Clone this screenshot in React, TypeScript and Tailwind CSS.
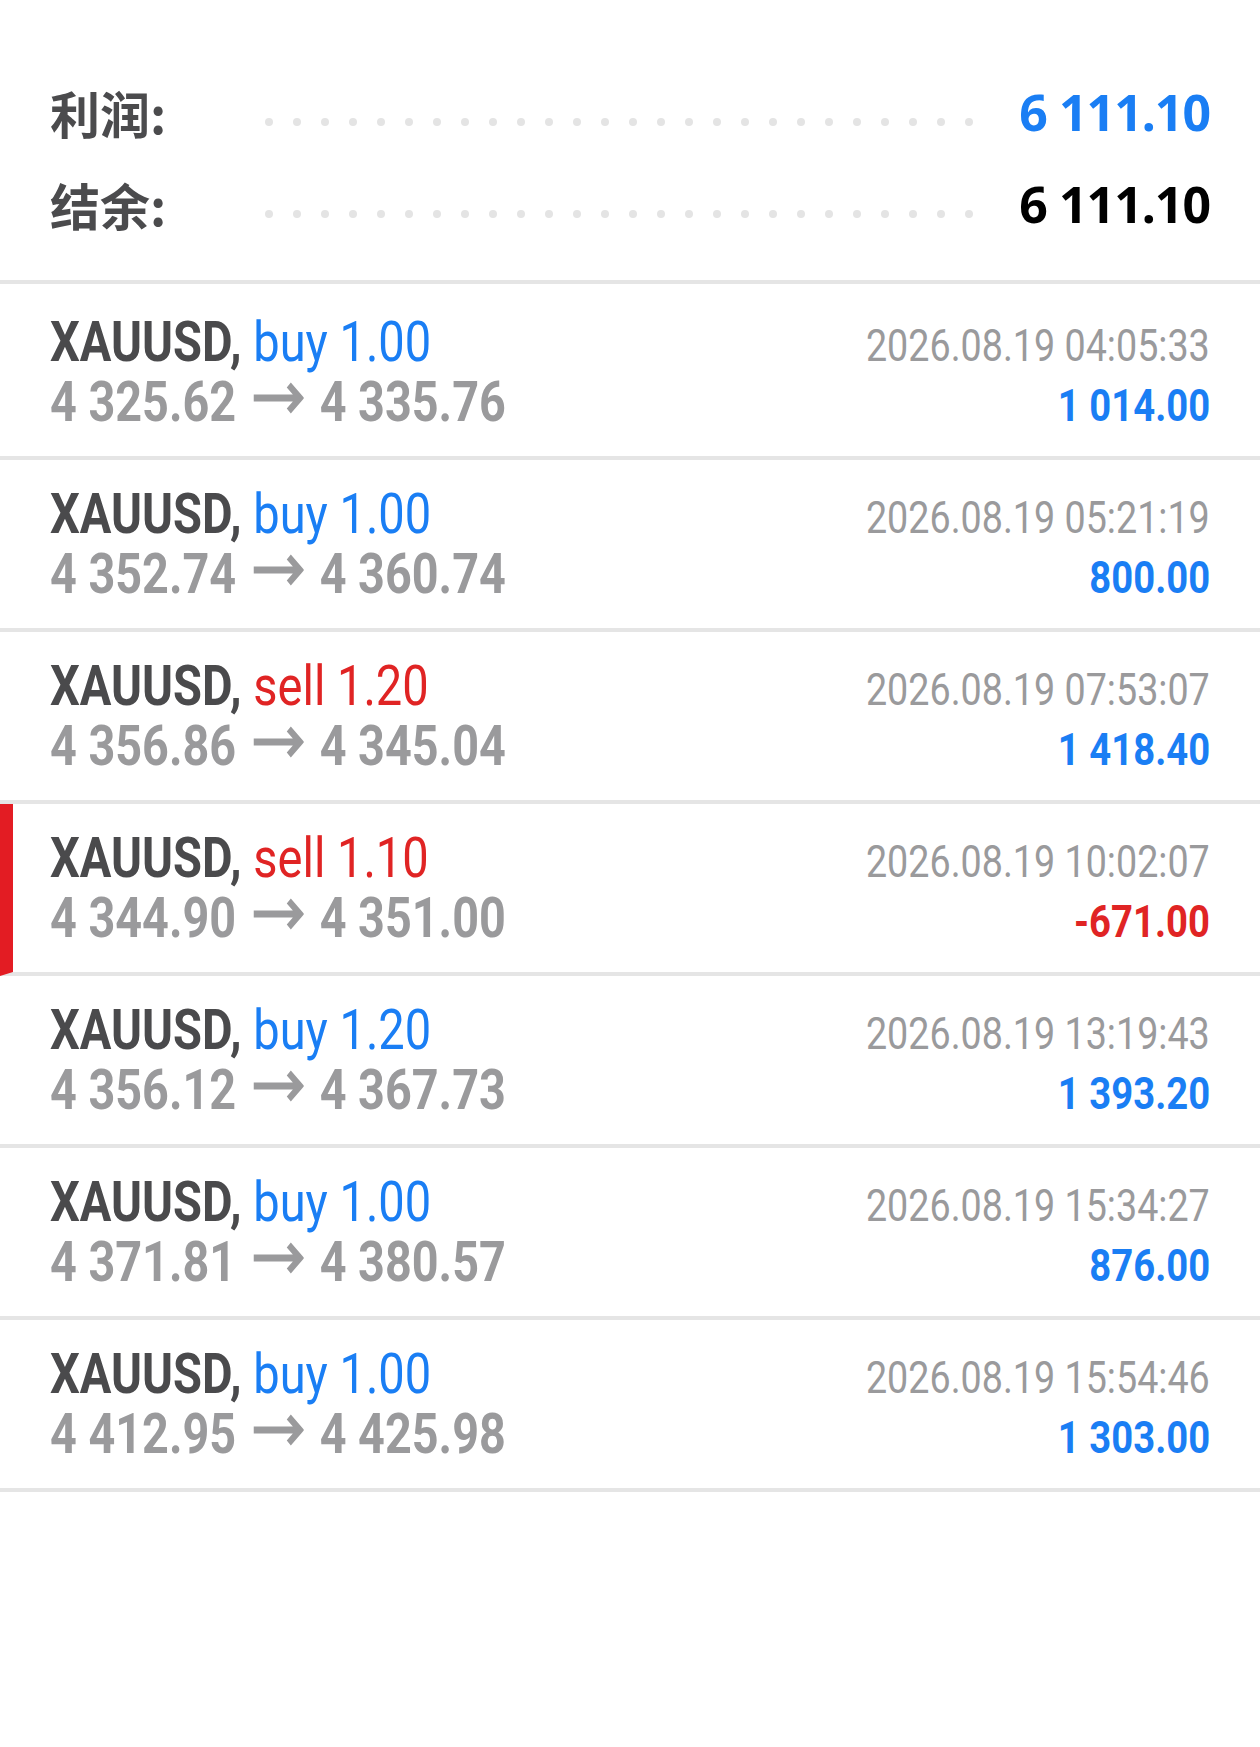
import React from "react";

type Trade = {
  side: "buy" | "sell";
  vol: string;
  open: string;
  close: string;
  time: string;
  profit: string;
  loss?: boolean;
  marked?: boolean;
};

const trades: Trade[] = [
  { side: "buy", vol: "1.00", open: "4 325.62", close: "4 335.76", time: "2026.08.19 04:05:33", profit: "1 014.00" },
  { side: "buy", vol: "1.00", open: "4 352.74", close: "4 360.74", time: "2026.08.19 05:21:19", profit: "800.00" },
  { side: "sell", vol: "1.20", open: "4 356.86", close: "4 345.04", time: "2026.08.19 07:53:07", profit: "1 418.40" },
  { side: "sell", vol: "1.10", open: "4 344.90", close: "4 351.00", time: "2026.08.19 10:02:07", profit: "-671.00", loss: true, marked: true },
  { side: "buy", vol: "1.20", open: "4 356.12", close: "4 367.73", time: "2026.08.19 13:19:43", profit: "1 393.20" },
  { side: "buy", vol: "1.00", open: "4 371.81", close: "4 380.57", time: "2026.08.19 15:34:27", profit: "876.00" },
  { side: "buy", vol: "1.00", open: "4 412.95", close: "4 425.98", time: "2026.08.19 15:54:46", profit: "1 303.00" },
];

function SummaryRow({ label, value, blue }: { label: string; value: string; blue?: boolean }) {
  return (
    <div className="flex items-center h-[92px]">
      <div className="w-[215px] font-['Noto_Sans_CJK_SC',sans-serif] font-bold text-[50px] leading-[60px] text-[#4b4b4d] whitespace-nowrap">
        {label}
      </div>
      <div className="flex items-center h-[60px]">
        <div className="flex gap-[20px] w-[708px] pt-[20px]">
          {Array.from({ length: 26 }).map((_, i) => (
            <span key={i} className="block w-[8px] h-[8px] rounded-full bg-[#e4e4e4]" />
          ))}
        </div>
      </div>
      <div
        className={
          "ml-auto font-['Noto_Sans',sans-serif] font-bold text-[50px] leading-[60px] tracking-[-1px] whitespace-nowrap " +
          (blue ? "text-[#1a7ef4]" : "text-black")
        }
      >
        {value}
      </div>
    </div>
  );
}

function Arrow() {
  return (
    <svg width="62" height="32" viewBox="0 0 62 32" className="inline-block align-[7px] mx-[19px]">
      <path d="M2 16 H56 M44 3 L57.5 16 L44 29" fill="none" stroke="#9a9a9c" strokeWidth="7" />
    </svg>
  );
}

function TradeRow({ t, first }: { t: Trade; first?: boolean }) {
  const sideColor = t.side === "buy" ? "text-[#1a7ef4]" : "text-[#e02424]";
  return (
    <div
      className={
        "border-b-4 border-[#e5e5e5] pr-[50px] font-['Roboto',sans-serif] " +
        (first ? "h-[176px] pt-[28px] " : "h-[172px] pt-[24px] ") +
        (t.marked ? "border-l-[13px] border-l-[#e31c23] pl-[37px]" : "pl-[50px]")
      }
    >
      <div className="flex justify-between items-baseline h-[60px] leading-[60px] whitespace-nowrap">
        <span className="inline-block origin-left scale-x-[0.84] text-[56px]">
          <span className="font-bold text-[#4a4a4c]">XAUUSD,</span>{" "}
          <span className={"font-normal " + sideColor}>
            {t.side} {t.vol}
          </span>
        </span>
        <span className="inline-block origin-right scale-x-[0.837] text-[45px] font-normal text-[#9a9a9c]">
          {t.time}
        </span>
      </div>
      <div className="flex justify-between items-baseline h-[60px] leading-[60px] whitespace-nowrap">
        <span className="inline-block origin-left scale-x-[0.835] text-[56px] font-bold text-[#9a9a9c]">
          {t.open}
          <Arrow />
          {t.close}
        </span>
        <span
          className={
            "inline-block origin-right scale-x-[0.85] text-[45px] font-bold " +
            (t.loss ? "text-[#e02424]" : "text-[#1a7ef4]")
          }
        >
          {t.profit}
        </span>
      </div>
    </div>
  );
}

export default function App() {
  return (
    <div className="w-[1260px] min-h-[1747px] bg-white">
      <div className="h-[284px] border-b-4 border-[#e5e5e5] pt-[66px] pl-[50px] pr-[50px]">
        <SummaryRow label="利润:" value="6 111.10" blue />
        <SummaryRow label="结余:" value="6 111.10" />
      </div>
      {trades.map((t, i) => (
        <TradeRow key={i} t={t} first={i === 0} />
      ))}
    </div>
  );
}
